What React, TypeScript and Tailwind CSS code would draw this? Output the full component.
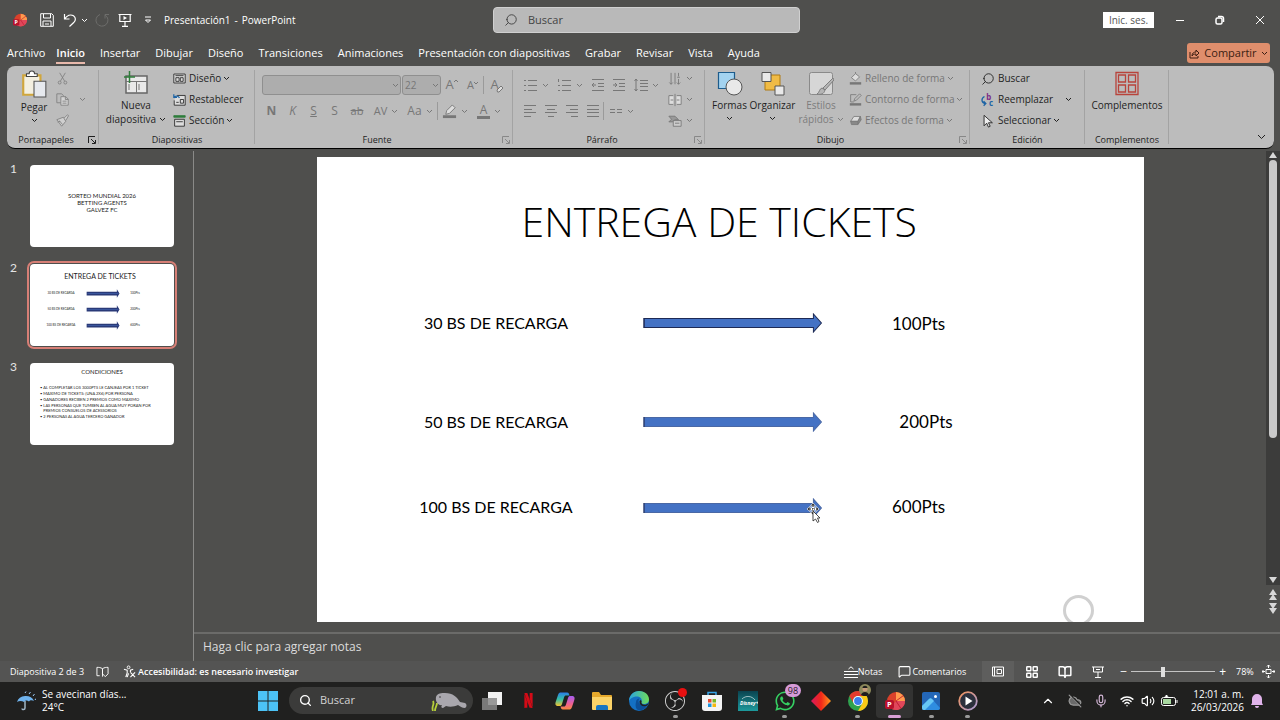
import type { ReactNode } from "react";
import { FaWhatsapp } from "react-icons/fa";
import { SiNetflix, SiObsstudio } from "react-icons/si";
import {
  BookOpen,
  ChevronUp,
  CloudOff,
  LayoutGrid,
  MessageSquare,
  Mic,
  Search,
  Volume2,
  Wifi,
} from "lucide-react";

interface IconProps {
  box?: string;
  className?: string;
  children: ReactNode;
}

function Icon({ box = "0 0 16 16", className = "h-4 w-4", children }: IconProps) {
  return (
    <svg
      viewBox={box}
      className={`shrink-0 ${className}`}
      fill="none"
      stroke="currentColor"
      aria-hidden="true"
    >
      {children}
    </svg>
  );
}

function Chevron({ className = "" }: { className?: string }) {
  return (
    <Icon box="0 0 7 5" className={`h-[5px] w-[7px] ${className}`}>
      <path d="M1 1l2.500 2.500L6 1" />
    </Icon>
  );
}

/* ---------- Title bar ---------- */

function PowerPointLogo({ className }: { className: string }) {
  return (
    <Icon box="0 0 20 20" className={className}>
      <g stroke="none">
        <circle cx="11" cy="10" r="9" fill="#d9412b" />
        <path d="M11 1a9 9 0 0 1 9 9h-9z" fill="#ff9a4d" />
        <path d="M20 10a9 9 0 0 1-15 6.700L11 10z" fill="#e0475a" />
        <path d="M11 10l7.500-5.500M11 10l5 7.500" stroke="#b9112b" strokeWidth=".8" />
        <rect x="0" y="9" width="9" height="9" rx="2" fill="#b9112b" />
        <text x="2" y="16.200" fontSize="7.500" fontWeight="700" fill="#fff" fontFamily="Open Sans">
          P
        </text>
      </g>
    </Icon>
  );
}

function TitleBar() {
  return (
    <header className="flex h-10 items-center pl-[13px]">
      <div className="flex flex-1 items-center">
        <PowerPointLogo className="h-[14px] w-[14px]" />
        <button aria-label="Guardar" className="ml-[13px]">
          <Icon box="0 0 14 14" className="h-[14px] w-[14px]">
            <path d="M.7.7h11l1.600 1.600v11H.7zM3.500 1v4h7V1M3 13V8h8v5M5 11h4" />
          </Icon>
        </button>
        <button aria-label="Deshacer" className="ml-[9px] flex items-center gap-1">
          <Icon box="0 0 14 14" className="h-[14px] w-[14px]">
            <path d="M1.500 1v5h5M1.800 5.800C4 2.500 7.500 1 10.500 2.800c2.500 1.800 2.300 4.600.5 6.400L6.500 13.500" strokeWidth="1.200" />
          </Icon>
          <Chevron />
        </button>
        <button aria-label="Rehacer" className="ml-[7px] text-[#6d6d6b]">
          <Icon box="0 0 14 14" className="h-[14px] w-[14px]">
            <path d="M5 1.500a6 6 0 1 0 5 .5M10 5.500V1.500h4" />
          </Icon>
        </button>
        <button aria-label="Presentar" className="ml-[9px]">
          <Icon box="0 0 14 14" className="h-[14px] w-[14px]">
            <path d="M.5 1.500h13M1.800 1.500v7h10.400v-7M7 8.500V13M4 13.300h6" strokeWidth="1.200" />
            <path d="M5.500 3v4L9 5z" fill="currentColor" stroke="none" />
          </Icon>
        </button>
        <button aria-label="Personalizar" className="ml-3">
          <Icon box="0 0 8 8" className="h-2 w-2">
            <path d="M1 1h6M1.500 4L4 6.500 6.500 4z" />
          </Icon>
        </button>
        <h1 className="ml-3 flex gap-1 text-[10px]">
          <span>Presentación1</span>
          <span>-</span>
          <span>PowerPoint</span>
        </h1>
      </div>
      <div className="flex h-[26px] w-[307px] items-center gap-[10px] rounded-sm border border-[#d0d0d0] bg-[#b9b9b9] px-[10px] text-[#3c3c3c]">
        <Search className="h-[14px] w-[14px] -scale-x-100" strokeWidth={1.500} />
        <input
          aria-label="Buscar"
          placeholder="Buscar"
          className="min-w-0 flex-1 text-[11px] outline-none placeholder:text-[#444]"
        />
      </div>
      <div className="flex flex-1 items-center justify-end">
        <button className="h-4 w-[51px] bg-white text-[10px] leading-4 text-[#555]">Inic. ses.</button>
        <button aria-label="Minimizar" className="ml-[21px]">
          <Icon box="0 0 10 10" className="h-[10px] w-[10px]"><path d="M1 5.500h8" /></Icon>
        </button>
        <button aria-label="Restaurar" className="ml-[30px]">
          <Icon box="0 0 10 10" className="h-[10px] w-[10px]">
            <rect x="1" y="3" width="6" height="6" rx="1.500" strokeWidth="1.500" />
            <path d="M3 1.500h3.500a2 2 0 0 1 2 2V7" strokeWidth="1.500" />
          </Icon>
        </button>
        <button aria-label="Cerrar" className="mr-[15px] ml-[30px]">
          <Icon box="0 0 10 10" className="h-[10px] w-[10px]"><path d="M1 1l8 8M9 1L1 9" /></Icon>
        </button>
      </div>
    </header>
  );
}

const tabs = [
  "Archivo",
  "Inicio",
  "Insertar",
  "Dibujar",
  "Diseño",
  "Transiciones",
  "Animaciones",
  "Presentación con diapositivas",
  "Grabar",
  "Revisar",
  "Vista",
  "Ayuda",
];

function TabBar() {
  return (
    <nav className="flex h-[26px] items-center justify-between pr-[10px] pl-[7px]">
      <div className="flex gap-[15px]">
        {tabs.map((tab) => (
          <button
            key={tab}
            className={`h-[22px] border-b-2 pt-[3px] text-[11px] whitespace-nowrap first:-mr-1 ${
              tab === "Inicio" ? "border-[#e8b9ac] font-semibold" : "border-transparent"
            }`}
          >
            {tab}
          </button>
        ))}
      </div>
      <button className="flex h-5 w-[83px] items-center justify-center gap-1 rounded-[3px] bg-[#df8e6c] text-[11px] text-[#3b1d12]">
        <Icon box="0 0 11 11" className="h-[11px] w-[11px]">
          <path d="M1 4v6h8V8M3 8c0-3 2-4 4-4V2l3 3-3 3V6C5 6 4 6.500 3 8z" />
        </Icon>
        Compartir
        <Chevron />
      </button>
    </nav>
  );
}

/* ---------- Ribbon ---------- */

interface GroupProps {
  title: string;
  width: string;
  launcher?: "on" | "off";
  children: ReactNode;
}

function Group({ title, width, launcher, children }: GroupProps) {
  return (
    <section className={`relative shrink-0 pt-[2px] ${width}`}>
      <div className="flex h-16">{children}</div>
      <h2 className={`h-4 text-center text-[9px] leading-4 ${launcher ? "pr-[14px]" : ""}`}>{title}</h2>
      {launcher && (
        <button
          aria-label={`Opciones de ${title}`}
          className={`absolute right-[3px] bottom-1 ${launcher === "off" ? "text-[#888]" : ""}`}
        >
          <Icon box="0 0 8 8" className="h-2 w-2">
            <path d="M.5 7V.5H7M3 3l4 4M7.500 4v3.500H4" />
          </Icon>
        </button>
      )}
      <span className="absolute top-1 right-0 bottom-1 w-px bg-[#a3a3a3]" />
    </section>
  );
}

interface BigButtonProps {
  icon: ReactNode;
  width: string;
  disabled?: boolean;
  children: ReactNode;
}

function BigButton({ icon, width, disabled, children }: BigButtonProps) {
  return (
    <button
      disabled={disabled}
      className={`flex flex-col items-center gap-[2px] pt-[2px] text-[10px] leading-[14px] whitespace-nowrap ${width} ${
        disabled ? "text-[#7d7d7d]" : ""
      }`}
    >
      {icon}
      <span className="flex flex-col items-center">{children}</span>
    </button>
  );
}

interface RowProps {
  icon: ReactNode;
  label: string;
  chevron?: boolean;
  disabled?: boolean;
  gap?: string;
}

function Row({ icon, label, chevron, disabled, gap = "ml-[2px]" }: RowProps) {
  return (
    <button
      disabled={disabled}
      className={`flex h-[21px] items-center text-[10px] whitespace-nowrap ${disabled ? "text-[#777]" : ""}`}
    >
      {icon}
      <span className="ml-[3px]">{label}</span>
      {chevron && <Chevron className={gap} />}
    </button>
  );
}

const small = "h-[13px] w-[13px]";

function Clipboard() {
  return (
    <Group title="Portapapeles" width="w-[92px]" launcher="on">
      <BigButton
        width="ml-[7px] w-10"
        icon={
          <Icon box="0 0 24 26" className="h-7 w-[26px]">
            <path d="M2 5h16v18H2z" fill="#f3efe0" stroke="#d0a63c" strokeWidth="2" />
            <path d="M5 6V3.500h2.500a2.500 2.500 0 0 1 5 0H15V6z" fill="#fff" stroke="#444" />
            <path d="M12 10.500h11V25H12z" fill="#e6e9ee" stroke="#555" />
          </Icon>
        }
      >
        <span>Pegar</span>
        <Chevron className="mt-1" />
      </BigButton>
      <div className="ml-[2px] flex flex-col text-[#7d7d7d]">
        <button aria-label="Cortar" className="flex h-[21px] items-center">
          <Icon className={small}>
            <path d="M4.500 1l6 10M11.500 1l-6 10" />
            <circle cx="4.500" cy="13" r="1.800" />
            <circle cx="11.500" cy="13" r="1.800" />
          </Icon>
        </button>
        <button aria-label="Copiar" className="flex h-[21px] items-center">
          <Icon className={small}>
            <path d="M6 12H1V1h6l2 2v1" />
            <path d="M6 4.500h6l3 3V15H6zM11.500 4.500V8H15M8 10h5M8 12.500h5" fill="#d5d5d5" />
          </Icon>
          <Chevron className="ml-[10px]" />
        </button>
        <button aria-label="Copiar formato" className="flex h-[21px] items-center">
          <Icon className={small}>
            <path d="M1 7l8-3 3 5-5 6zM10 5l4-4 1.500 1L12 8M4 8l4 5M2 10l3-1" fill="#cfcfcf" />
          </Icon>
        </button>
      </div>
    </Group>
  );
}

function Slides() {
  return (
    <Group title="Diapositivas" width="w-[156px]">
      <BigButton
        width="ml-1 w-[66px]"
        icon={
          <Icon box="0 0 26 26" className="h-[26px] w-[26px]">
            <path d="M3 6h21v17H3z" fill="#e9e9e9" stroke="#666" strokeWidth="1.500" />
            <path d="M3 11.500h21M13.500 11.500V23M6 14v6M16 14v6" stroke="#777" />
            <path d="M6.500 1v12M1 7h11" stroke="#2f7d3b" strokeWidth="1.500" />
          </Icon>
        }
      >
        <span>Nueva</span>
        <span className="flex items-center gap-[3px]">
          diapositiva <Chevron />
        </span>
      </BigButton>
      <div className="ml-1 flex flex-col">
        <Row
          label="Diseño"
          chevron
          icon={
            <Icon className={small}>
              <path d="M1 2.500h14v11H1z" fill="#ddd" />
              <path d="M3 4.500h10M3.500 7h4v4.500h-4zM9 7h3.500v4.500H9z" />
            </Icon>
          }
        />
        <Row
          label="Restablecer"
          icon={
            <Icon className={small}>
              <path d="M5 3h10v12H1.500V9" fill="#ddd" />
              <path d="M4 11.500h3M9 8h4v4.500H9z" />
              <path d="M1 5.500C3 3 6 3 8 6M1 1.500v4h4" stroke="#1d64a5" strokeWidth="1.500" />
            </Icon>
          }
        />
        <Row
          label="Sección"
          chevron
          icon={
            <Icon className={small}>
              <path d="M1 2h14v2H1z" fill="#2f7d3b" stroke="#2f7d3b" />
              <path d="M2 6.500h12V15H2z" fill="#ddd" />
              <path d="M4 9.500h8" />
            </Icon>
          }
        />
      </div>
    </Group>
  );
}

interface ToolProps {
  label: string;
  chevron?: boolean;
  width?: string;
  children: ReactNode;
}

function Tool({ label, chevron, width = "w-[21px]", children }: ToolProps) {
  return (
    <button
      disabled
      aria-label={label}
      className={`flex h-[26px] shrink-0 items-center justify-center gap-1 text-[12px] text-[#777] ${width}`}
    >
      {children}
      {chevron && <Chevron />}
    </button>
  );
}

function Divider() {
  return <span className="h-[18px] w-px shrink-0 self-center bg-[#9a9a9a]" />;
}

function Combo({ label, value, width }: { label: string; value: string; width: string }) {
  return (
    <div className={`relative flex items-center text-[#777] ${width}`}>
      <select
        disabled
        aria-label={label}
        className="h-5 w-full appearance-none rounded-[3px] border border-[#8f8f8f] bg-[#adadad] px-[2px] text-[10px] opacity-100"
      >
        <option>{value}</option>
      </select>
      <Chevron className="pointer-events-none absolute right-[2px]" />
    </div>
  );
}

function FontGroup() {
  return (
    <Group title="Fuente" width="w-[258px]" launcher="off">
      <div className="flex flex-col pt-1 pl-[7px]">
        <div className="flex h-[26px] items-center">
          <Combo label="Fuente" value="" width="w-[139px]" />
          <Combo label="Tamaño" value="22" width="ml-px w-[39px]" />
          <Tool label="Aumentar">
            <span className="flex text-[13px]">
              A
              <Icon box="0 0 4 4" className="mt-1 h-1 w-1"><path d="M0 3l2-2 2 2" /></Icon>
            </span>
          </Tool>
          <Tool label="Reducir">
            <span className="flex text-[11px]">
              A
              <Icon box="0 0 4 4" className="mt-1 h-1 w-1"><path d="M0 1l2 2 2-2" /></Icon>
            </span>
          </Tool>
          <Divider />
          <Tool label="Borrar formato" width="w-[26px]">
            <span className="text-[13px]">A</span>
            <Icon box="0 0 8 8" className="mt-2 -ml-[7px] h-2 w-2">
              <path d="M1 5l4-4 2 2-4 4H1.500z" fill="#ddd" />
            </Icon>
          </Tool>
        </div>
        <div className="-ml-px flex h-[26px] items-center">
          <Tool label="Negrita"><b>N</b></Tool>
          <Tool label="Cursiva"><i>K</i></Tool>
          <Tool label="Subrayado"><span className="underline">S</span></Tool>
          <Tool label="Sombra">S</Tool>
          <Tool label="Tachado" width="w-6"><span className="text-[11px] line-through">ab</span></Tool>
          <Tool label="Espaciado" chevron width="w-[34px]"><span className="text-[11px]">AV</span></Tool>
          <Tool label="Mayúsculas" chevron width="w-[34px]">Aa</Tool>
          <Divider />
          <Tool label="Resaltado" chevron width="w-[34px]">
            <Icon className="h-[15px] w-[15px]">
              <path d="M4 11l1-4 6-6 3 3-6 6z" fill="#ddd" />
              <path d="M1 13.500h14" strokeWidth="3" />
            </Icon>
          </Tool>
          <Tool label="Color" chevron width="w-[34px]">
            <span className="border-b-[3px] border-[#777] px-[3px] leading-[13px]">A</span>
          </Tool>
        </div>
      </div>
    </Group>
  );
}

function Lines({ d }: { d: string }) {
  return (
    <Icon box="0 0 14 14" className="h-[14px] w-[14px]">
      <path d={d} />
    </Icon>
  );
}

function Paragraph() {
  return (
    <Group title="Párrafo" width="w-[192px]" launcher="off">
      <div className="flex w-[144px] flex-col pt-1 pl-[6px]">
        <div className="flex">
          <Tool label="Viñetas" chevron width="w-[34px]">
            <Lines d="M0 2.500h2M0 7.500h2M0 12.500h2M4 2.500h9M4 7.500h9M4 12.500h9" />
          </Tool>
          <Tool label="Numeración" chevron width="w-[34px]">
            <Lines d="M.5 1v3M0 7.500h2M0 12.500h2M4 2.500h9M4 7.500h9M4 12.500h9" />
          </Tool>
          <Tool label="Reducir sangría">
            <Lines d="M1 1.500h12M7 5.500h6M7 8.500h6M1 12.500h12M5 7H1M3 5L1 7l2 2" />
          </Tool>
          <Tool label="Aumentar sangría">
            <Lines d="M1 1.500h12M7 5.500h6M7 8.500h6M1 12.500h12M1 7h4M3 5l2 2-2 2" />
          </Tool>
          <Tool label="Interlineado" chevron width="w-[34px]">
            <Lines d="M2 1v12M.5 3L2 1l1.500 2M.5 11L2 13l1.500-2M6 2.500h8M6 5.500h8M6 8.500h8M6 12.500h8" />
          </Tool>
        </div>
        <div className="flex">
          <Tool label="Izquierda"><Lines d="M1 1.500h12M1 5.500h8M1 8.500h12M1 12.500h7" /></Tool>
          <Tool label="Centrar"><Lines d="M1 1.500h12M3 5.500h8M1 8.500h12M4 12.500h6" /></Tool>
          <Tool label="Derecha"><Lines d="M1 1.500h12M5 5.500h8M1 8.500h12M6 12.500h7" /></Tool>
          <Tool label="Justificar"><Lines d="M1 1.500h12M1 5.500h12M1 8.500h12M1 12.500h12" /></Tool>
          <Divider />
          <Tool label="Columnas" chevron width="w-[34px]">
            <Lines d="M1 5.500h5M8 5.500h5M1 8.500h5M8 8.500h5" />
          </Tool>
        </div>
      </div>
      <div className="ml-[11px] flex flex-col text-[#777]">
        <button disabled aria-label="Dirección" className="flex h-[21px] items-center gap-1">
          <Icon className="h-[14px] w-[14px]">
            <path d="M3.500 1v13M1.500 12l2 2 2-2M8 1v13M12 1v4M10.500 6h3M12 8v6M10 12l2 2 2-2" />
          </Icon>
          <Chevron />
        </button>
        <button disabled aria-label="Alinear" className="flex h-[21px] items-center gap-1">
          <Icon className="h-[14px] w-[14px]">
            <path d="M6 3H1v10h5M10 3h5v10h-5" fill="#ddd" />
            <path d="M8 1v14M3 8h3M10 8h3" />
          </Icon>
          <Chevron />
        </button>
        <button disabled aria-label="SmartArt" className="flex h-[21px] items-center gap-1">
          <Icon className="h-[14px] w-[14px]">
            <path d="M1 2.500h7l4 4H8L5 9H1l3-3z" fill="#999" />
            <path d="M6 7.500h9V14H6z" fill="#ccc" />
            <path d="M8 10.500h5" />
          </Icon>
          <Chevron />
        </button>
      </div>
    </Group>
  );
}

function Drawing() {
  return (
    <Group title="Dibujo" width="w-[265px]" launcher="off">
      <BigButton
        width="ml-1 w-[41px]"
        icon={
          <Icon box="0 0 26 26" className="h-[26px] w-[26px]">
            <path d="M1.500 2.500h16v16h-16z" fill="#a3d3f0" stroke="#1d5c8c" strokeWidth="1.200" />
            <circle cx="17" cy="17" r="8" fill="#e9e9e9" stroke="#555" />
          </Icon>
        }
      >
        <span>Formas</span>
        <Chevron className="mt-1" />
      </BigButton>
      <BigButton
        width="w-[45px]"
        icon={
          <Icon box="0 0 26 26" className="h-[26px] w-[26px]">
            <path d="M5 5h15v15H5z" fill="#f0bb45" stroke="#b07a12" />
            <path d="M2 2.500h9v9H2zM15 16h9v9h-9z" fill="#e9e9e9" stroke="#555" />
          </Icon>
        }
      >
        <span>Organizar</span>
        <Chevron className="mt-1" />
      </BigButton>
      <BigButton
        disabled
        width="w-[52px]"
        icon={
          <Icon box="0 0 26 26" className="h-[26px] w-[26px]">
            <rect x="1.500" y="2.500" width="23" height="22" rx="2" fill="#d6d6d6" stroke="#8a8a8a" />
            <path d="M25 8L15 18l2 2 9-10zM14 18c-3 1-2 4-5 6 4 1 7 0 8-4z" fill="#b5b5b5" />
          </Icon>
        }
      >
        <span>Estilos</span>
        <span className="flex items-center gap-[3px]">
          rápidos <Chevron />
        </span>
      </BigButton>
      <div className="ml-[2px] flex flex-col">
        <Row
          disabled
          chevron
          label="Relleno de forma"
          icon={
            <Icon className={small}>
              <path d="M3 7l5-5 5 4-5 5zM8 2V0" fill="#ddd" />
              <path d="M1 14h14" strokeWidth="3" />
            </Icon>
          }
        />
        <Row
          disabled
          chevron
          label="Contorno de forma"
          icon={
            <Icon className={small}>
              <path d="M9 2H2v9h4M6 10l1-3 6-6 2 2-6 6z" />
              <path d="M1 14h14" strokeWidth="3" />
            </Icon>
          }
        />
        <Row
          disabled
          chevron
          label="Efectos de forma"
          icon={
            <Icon className={small}>
              <path d="M2 9l4-6h8l-3 6z" fill="#ddd" />
              <path d="M2 9h9v4H3zM11 9l3-6 1 4-4 6" fill="#888" />
            </Icon>
          }
        />
      </div>
    </Group>
  );
}

function Editing() {
  return (
    <Group title="Edición" width="w-[115px]">
      <div className="ml-[11px] flex flex-col">
        <Row label="Buscar" icon={<Search className="h-[14px] w-[14px] -scale-x-100" strokeWidth={1.500} />} />
        <Row
          label="Reemplazar"
          chevron
          gap="ml-3"
          icon={
            <Icon className="h-[14px] w-[14px]">
              <path d="M4 4C0 6 0 11 5 12M3 9.500L5.500 12 3 14.500" stroke="#1d64a5" strokeWidth="1.500" />
              <text x="6" y="8" fontSize="9" fill="#7a2a85" stroke="none" fontWeight="700">b</text>
              <text x="9" y="15" fontSize="9" fill="#1d64a5" stroke="none" fontWeight="700">c</text>
            </Icon>
          }
        />
        <Row
          label="Seleccionar"
          chevron
          icon={
            <Icon className="h-[14px] w-[14px]">
              <path d="M3.500 1.500v12l3-3 2 4.500 2-1-2-4H13z" fill="#eee" />
            </Icon>
          }
        />
      </div>
    </Group>
  );
}

function AddIns() {
  return (
    <Group title="Complementos" width="w-[84px]">
      <BigButton
        width="w-full"
        icon={
          <Icon box="0 0 26 26" className="h-[26px] w-[26px]">
            <g stroke="#b8433b" strokeWidth="1.300">
              <path d="M2 2.500h22v22H2z" />
              <path d="M4.500 5h7v7h-7zM14.500 5h7v7h-7zM4.500 15h7v7h-7zM14.500 15h7v7h-7z" />
            </g>
          </Icon>
        }
      >
        <span>Complementos</span>
      </BigButton>
    </Group>
  );
}

function Ribbon() {
  return (
    <div className="mr-[6px] ml-[7px] flex h-[83px] rounded-lg border-b border-black bg-[#bcbcbc] text-[#1f1f1f]">
      <Clipboard />
      <Slides />
      <FontGroup />
      <Paragraph />
      <Drawing />
      <Editing />
      <AddIns />
      <button aria-label="Contraer cinta" className="mr-2 mb-2 ml-auto self-end">
        <Icon box="0 0 9 6" className="h-[6px] w-[9px]"><path d="M1 1l3.500 3.500L8 1" /></Icon>
      </button>
    </div>
  );
}

/* ---------- Slides ---------- */

const arrowShape = "M1 5.500h169V1l8 9-8 9v-4.500H1z";

const rewards = [
  {
    label: "30 BS DE RECARGA",
    points: "100Pts",
    labelAt: "top-[35.6%] left-[21.7%]",
    arrowAt: "top-[35.7%] left-[39.5%]",
    pointsAt: "top-[36%] left-[72.8%]",
    outline: "#1d2a55",
  },
  {
    label: "50 BS DE RECARGA",
    points: "200Pts",
    labelAt: "top-[57%] left-[21.7%]",
    arrowAt: "top-[57%] left-[39.5%]",
    pointsAt: "top-[57%] left-[73.7%]",
    outline: "#4a68a5",
  },
  {
    label: "100 BS DE RECARGA",
    points: "600Pts",
    labelAt: "top-[75.3%] left-[21.7%]",
    arrowAt: "top-[75.4%] left-[39.5%]",
    pointsAt: "top-[75.3%] left-[72.8%]",
    outline: "#4a68a5",
  },
];

function Slide() {
  return (
    <article className="relative mx-auto aspect-[827/465] w-full max-w-[827px] overflow-hidden bg-white font-[Lato,sans-serif] text-black">
      <h2 className="absolute top-[14%] left-[48.7%] -translate-x-1/2 -translate-y-1/2 font-['Open_Sans',sans-serif] text-[41px] font-light whitespace-nowrap">
        ENTREGA DE TICKETS
      </h2>
      {rewards.map((item) => (
        <div key={item.label} className="whitespace-nowrap">
          <p className={`absolute -translate-x-1/2 -translate-y-1/2 text-[16px] ${item.labelAt}`}>{item.label}</p>
          <svg viewBox="0 0 179 20" className={`absolute w-[21.7%] -translate-y-1/2 ${item.arrowAt}`}>
            <path d={arrowShape} fill="#4472c4" stroke={item.outline} />
            <path d="M1 5v10" stroke="#1d2a55" />
          </svg>
          <p className={`absolute -translate-x-1/2 -translate-y-1/2 text-[17px] ${item.pointsAt}`}>{item.points}</p>
        </div>
      ))}
      <span className="absolute -bottom-1 left-[90.3%] h-[31px] w-[31px] rounded-full border-[3px] border-[#d0d0d0]" />
      <svg viewBox="0 0 16 20" className="absolute top-[74.4%] left-[59.2%] h-5 w-4">
        <path d="M7 0l2.500 3h-5zM7 12l2.500-3h-5zM1 6l3-2.500v5zM13 6l-3-2.500v5z" fill="#111" stroke="#fff" strokeWidth=".7" />
        <path d="M4 6h6M7 3v6" stroke="#fff" strokeWidth="2.500" />
        <path d="M4 6h6M7 3v6" stroke="#111" strokeDasharray="1 1" />
        <path d="M7 8v10l2.500-2 2 3.500 1.500-1-1.500-3.500H14z" fill="#fff" stroke="#222" strokeWidth=".8" />
      </svg>
    </article>
  );
}

const conditions = [
  "AL COMPLETAR LOS 3000PTS LE CANJEAS POR 1 TICKET",
  "MAXIMO DE TICKETS: (UNA 2X6) POR PERSONA",
  "GANADORES RECIBEN 2 PREMIOS COMO MAXIMO",
  "LAS PERSONAS QUE TUMBEN AL AGUA MUY PORAN POR PREMIOS CONSUELOS DE ACESSORIOS",
  "2 PERSONAS AL AGUA TERCERO GANADOR",
];

function Thumb({ number, active, children }: { number: number; active?: boolean; children: ReactNode }) {
  return (
    <li className="flex gap-3">
      <span className="w-2 shrink-0 text-[12px] leading-2 text-[#e4e4e4]">{number}</span>
      <button
        className={`h-[82px] min-w-0 flex-1 overflow-hidden rounded-[4px] bg-white text-[#222] ${
          active ? "outline-[2px] outline-offset-[1px] outline-[#d77f76]" : ""
        }`}
      >
        {children}
      </button>
    </li>
  );
}

function ThumbnailPane() {
  return (
    <aside className="w-[194px] shrink-0 border-r border-[#8a8a88] pt-[14px] pr-[19px] pl-[10px]">
      <ol className="flex flex-col gap-[17px] font-[Lato,sans-serif]">
        <Thumb number={1}>
          <span className="block pb-2 text-[6px] leading-[7px]">
            SORTEO MUNDIAL 2026
            <br />
            BETTING AGENTS
            <br />
            GALVEZ FC
          </span>
        </Thumb>
        <Thumb number={2} active>
          <span className="block h-full pt-[7px]">
            <span className="block pr-1 text-[7px] leading-[10px]">ENTREGA DE TICKETS</span>
            <span className="mt-2 flex flex-col gap-2 text-[3px] leading-2">
              {rewards.map((item) => (
                <span key={item.label} className="flex items-center">
                  <span className="w-[57px] pl-[5px]">{item.label}</span>
                  <svg viewBox="0 0 179 20" className="w-8 overflow-visible" preserveAspectRatio="none" height="5">
                    <path d={arrowShape} fill="#3f5fa8" stroke="#2a3a78" strokeWidth="6" />
                  </svg>
                  <span className="w-8">{item.points}</span>
                </span>
              ))}
            </span>
          </span>
        </Thumb>
        <Thumb number={3}>
          <span className="block h-full pt-1">
            <span className="block text-[6px] leading-[10px]">CONDICIONES</span>
            <span className="mt-2 block pr-3 pl-[10px] text-left text-[4px]">
              {conditions.map((text) => (
                <span key={text} className="mb-px flex gap-px leading-[5px]">
                  <span>•</span>
                  <span>{text}</span>
                </span>
              ))}
            </span>
          </span>
        </Thumb>
      </ol>
    </aside>
  );
}

function ScrollBar() {
  return (
    <div className="flex w-[14px] shrink-0 flex-col items-center text-[#d8d8d8]">
      <div className="flex w-full flex-1 flex-col items-center gap-[2px] bg-[#3c3c3b] pt-px pb-[2px]">
        <Icon box="0 0 8 6" className="h-[6px] w-2"><path d="M0 6h8L4 0z" fill="currentColor" stroke="none" /></Icon>
        <span className="h-[278px] w-2 rounded-full bg-[#c9c9c9]" />
        <Icon box="0 0 8 6" className="mt-auto h-[6px] w-2"><path d="M0 0h8L4 6z" fill="currentColor" stroke="none" /></Icon>
      </div>
      <button aria-label="Diapositiva anterior" className="pt-1">
        <Icon box="0 0 8 11" className="h-[11px] w-2"><path d="M0 6h8L4 0zM0 11h8L4 5z" fill="currentColor" stroke="none" /></Icon>
      </button>
      <button aria-label="Diapositiva siguiente" className="pt-[3px] pb-[18px]">
        <Icon box="0 0 8 11" className="h-[11px] w-2"><path d="M0 0h8L4 6zM0 5h8l-4 6z" fill="currentColor" stroke="none" /></Icon>
      </button>
    </div>
  );
}

/* ---------- Status bar and taskbar ---------- */

function StatusBar() {
  return (
    <footer className="flex h-[21px] items-center bg-[#545453] pr-[5px] pl-[10px] text-[9px] whitespace-nowrap">
      <span className="w-[86px]">Diapositiva 2 de 3</span>
      <button aria-label="Ortografía" className="mr-[14px]">
        <Icon box="0 0 14 12" className="h-3 w-[13px]">
          <path d="M7 2.500C5 1 3 1 1 1v9h3M7 2.500C9 1 11 1 13 1v7l-3 3-3-3zM7 2.500V11" />
        </Icon>
      </button>
      <button className="flex items-center gap-[2px] font-semibold">
        <Icon box="0 0 14 14" className="h-[13px] w-[13px]">
          <circle cx="6" cy="2.500" r="1.500" />
          <path d="M1 4.500l3.500 1v3L3 13M11 4.500L8 5.500v2M6 9l-1.500 4M8 8l5 5M13 8l-5 5" strokeWidth="1.200" />
        </Icon>
        Accesibilidad: es necesario investigar
      </button>
      <div className="ml-auto flex items-center">
        <button className="flex items-center">
          <Icon box="0 0 14 12" className="h-3 w-[14px]"><path d="M0 5.500h14M0 8.500h14M0 11.500h14M4.500 3L7 .8 9.500 3" /></Icon>
          Notas
        </button>
        <button className="ml-4 flex items-center gap-px">
          <MessageSquare className="h-[13px] w-[13px]" strokeWidth={2} />
          Comentarios
        </button>
        <button aria-label="Normal" className="ml-4 flex h-[21px] w-8 items-center justify-center bg-[#5e5e5d]">
          <Icon box="0 0 12 10" className="h-[11px] w-3"><path d="M.5.5h11v9H.5zM2.500.500v9M5 3h4.500v4H5z" /></Icon>
        </button>
        <button aria-label="Clasificador" className="flex w-9 justify-center">
          <LayoutGrid className="h-[14px] w-[14px]" strokeWidth={2.500} />
        </button>
        <button aria-label="Lectura" className="flex w-[30px] justify-center">
          <BookOpen className="h-[14px] w-[14px]" strokeWidth={2.500} />
        </button>
        <button aria-label="Presentación" className="flex w-9 justify-center">
          <Icon box="0 0 12 12" className="h-3 w-3"><path d="M0 1h12M1.500 1v5h9V1M6 6v5M3 11.500h6M4 3.500h4" /></Icon>
        </button>
        <button aria-label="Alejar" className="ml-1 text-[12px]">−</button>
        <input
          type="range"
          aria-label="Zoom"
          min={10}
          max={190}
          defaultValue={78}
          className="mx-1 h-[10px] w-[84px] appearance-none bg-[linear-gradient(#c4c4c4,#c4c4c4)] bg-[length:100%_1px] bg-center bg-no-repeat [&::-webkit-slider-thumb]:h-[10px] [&::-webkit-slider-thumb]:w-1 [&::-webkit-slider-thumb]:appearance-none [&::-webkit-slider-thumb]:bg-[#dedede]"
        />
        <button aria-label="Acercar" className="text-[12px]">+</button>
        <span className="ml-[10px] w-[26px]">78%</span>
        <button aria-label="Ajustar">
          <Icon box="0 0 13 13" className="h-[13px] w-[13px]">
            <path d="M4 4.500h5v4H4zM6.500 0v3M6.500 10v3M0 6.500h3M10 6.500h3M5 1.500L6.500 0 8 1.500M5 11.500L6.500 13 8 11.500M1.500 5L0 6.500 1.500 8M11.500 5L13 6.500 11.500 8" />
          </Icon>
        </button>
      </div>
    </footer>
  );
}

function AppSlot({ label, mark, active, children }: { label: string; mark?: boolean; active?: boolean; children: ReactNode }) {
  return (
    <button
      aria-label={label}
      className={`relative flex h-[34px] items-center justify-center rounded ${active ? "bg-[#333332]" : ""}`}
    >
      {children}
      {mark && (
        <span
          className={`absolute bottom-0 h-[3px] rounded-full ${active ? "w-[13px] bg-[#d9a0d6]" : "w-[5px] bg-[#9a9a9a]"}`}
        />
      )}
    </button>
  );
}

function Apps() {
  return (
    <div className="grid w-[512px] grid-cols-14">
      <AppSlot label="Vista de tareas">
        <Icon box="0 0 22 20" className="h-5 w-[22px]">
          <path d="M7 1h14v13H7z" fill="#f2f2f2" stroke="none" />
          <path d="M1 7h15v12H1z" fill="#8a8a8a" fillOpacity=".85" stroke="none" />
        </Icon>
      </AppSlot>
      <AppSlot label="Netflix"><SiNetflix className="h-[15px] w-[15px] text-[#d40b17]" /></AppSlot>
      <AppSlot label="Copilot">
        <Icon box="0 0 20 20" className="h-5 w-5">
          <defs>
            <linearGradient id="copA" x1="0" y1="0" x2="0" y2="1">
              <stop stopColor="#2b7de9" />
              <stop offset=".5" stopColor="#35bfa6" />
              <stop offset="1" stopColor="#f3c230" />
            </linearGradient>
            <linearGradient id="copB" x1="0" y1="0" x2="0" y2="1">
              <stop stopColor="#a55cf0" />
              <stop offset=".6" stopColor="#f0608f" />
              <stop offset="1" stopColor="#f78a3c" />
            </linearGradient>
          </defs>
          <path d="M6 1.500h6c2 0 2 1.500 2.500 3H11c-1 0-1.500.5-2 2l-2 6.500c-.5 1.500-1 2-2.500 2H3C0 15 0 12.500 1 10l2-6c.7-2 1.500-2.500 3-2.500z" fill="url(#copA)" stroke="none" />
          <path d="M14 18.500H8c-2 0-2-1.500-2.500-3H9c1 0 1.500-.5 2-2L13 7c.5-1.500 1-2 2.500-2H17c3 0 3 2.500 2 5l-2 6c-.7 2-1.500 2.500-3 2.500z" fill="url(#copB)" stroke="none" />
        </Icon>
      </AppSlot>
      <AppSlot label="Explorador">
        <Icon box="0 0 22 20" className="h-5 w-[22px]">
          <g stroke="none">
            <path d="M1 2a1 1 0 0 1 1-1h6l2 3h10a1 1 0 0 1 1 1v13H1z" fill="#e6a92c" />
            <path d="M1 6h20v12a1 1 0 0 1-1 1H2a1 1 0 0 1-1-1z" fill="#fbd368" />
            <path d="M5 19v-3a2 2 0 0 1 2-2h8a2 2 0 0 1 2 2v3z" fill="#1976c2" />
          </g>
        </Icon>
      </AppSlot>
      <AppSlot label="Edge">
        <Icon box="0 0 20 20" className="h-5 w-5">
          <defs>
            <linearGradient id="edge" x1="0" y1="0" x2="1" y2="0">
              <stop stopColor="#2aa3e0" />
              <stop offset="1" stopColor="#6edc5a" />
            </linearGradient>
          </defs>
          <g stroke="none">
            <circle cx="10" cy="10" r="10" fill="#1470c4" />
            <path d="M0 10C0 4 5 0 10 0c6 0 10 4 10 8.500 0 3-2.500 4.500-5 4.500-2 0-3-1-2.500-2C14 7 10 5 6.500 5.500 3 6 1 8 0 10z" fill="url(#edge)" />
            <path d="M7 11c0-2 1.500-3.500 3.500-3.500C8 10 10 16 18.500 14 16 19 11 20 9 19c-2-1-3-4-2-8z" fill="#0c4f98" />
            <path d="M12.500 11C12 12 13 13.500 15.500 13.800c1.500 0 3-.6 4-1.800l-1 2.500c-4 2-8 0-8-3.500 0-1 .5-1.500 1-2 1 .5 1.300 1 1 2z" fill="#20201f" />
          </g>
        </Icon>
      </AppSlot>
      <AppSlot label="OBS" mark>
        <SiObsstudio className="h-5 w-5 text-[#d6d6d6]" />
        <span className="absolute top-1 right-[6px] h-[9px] w-[9px] rounded-full bg-[#e81010]" />
      </AppSlot>
      <AppSlot label="Tienda">
        <Icon box="0 0 20 20" className="h-5 w-5">
          <path d="M6 5V1.500h8V5" stroke="#36a3e8" strokeWidth="1.500" />
          <g stroke="none">
            <path d="M0 4h20v13a3 3 0 0 1-3 3H3a3 3 0 0 1-3-3z" fill="#f4f4f4" />
            <path d="M6 8h3.500v3.500H6z" fill="#e8492e" />
            <path d="M10.500 8H14v3.500h-3.500z" fill="#76b82a" />
            <path d="M6 12.500h3.500V16H6z" fill="#1e95e0" />
            <path d="M10.500 12.500H14V16h-3.500z" fill="#f6b80e" />
          </g>
        </Icon>
      </AppSlot>
      <AppSlot label="Disney+">
        <Icon box="0 0 20 20" className="h-5 w-5">
          <defs>
            <linearGradient id="disney" x1="0" y1="0" x2="0" y2="1">
              <stop stopColor="#0a4350" />
              <stop offset="1" stopColor="#1d9a9c" />
            </linearGradient>
          </defs>
          <path d="M0 0h20v20H0z" fill="url(#disney)" stroke="none" />
          <path d="M4 8c4-4 10-3 13 1" stroke="#fff" strokeWidth=".6" />
          <text x="2" y="13.500" fontSize="5" fontStyle="italic" fontWeight="700" fill="#fff" stroke="none">Disney+</text>
        </Icon>
      </AppSlot>
      <AppSlot label="WhatsApp" mark>
        <FaWhatsapp className="h-[22px] w-[22px] text-[#35d062]" />
        <span className="absolute top-0 right-[2px] rounded-full bg-[#d69ad8] px-[3px] text-[9px] leading-[13px] text-[#2b1a2b]">98</span>
      </AppSlot>
      <AppSlot label="AnyDesk">
        <Icon box="0 0 20 20" className="h-5 w-5">
          <defs>
            <linearGradient id="rhomb" x1="0" y1="0" x2="1" y2="0">
              <stop stopColor="#d81b60" />
              <stop offset=".5" stopColor="#f02618" />
              <stop offset="1" stopColor="#ff9a1f" />
            </linearGradient>
          </defs>
          <path d="M10 0l10 10-10 10L0 10z" fill="url(#rhomb)" stroke="none" />
        </Icon>
      </AppSlot>
      <AppSlot label="Chrome" mark>
        <Icon box="0 0 20 20" className="h-5 w-5">
          <g stroke="none">
            <circle cx="10" cy="10" r="10" fill="#2fa24f" />
            <path d="M1.340 5A10 10 0 0 1 18.660 5H10a5 5 0 0 0-4.330 7.500z" fill="#e33b2e" />
            <path d="M18.660 5A10 10 0 0 1 10 20l4.330-7.500A5 5 0 0 0 10 5z" fill="#fbc917" />
            <circle cx="10" cy="10" r="5" fill="#fff" />
            <circle cx="10" cy="10" r="3.900" fill="#3b7ded" />
          </g>
        </Icon>
        <Icon box="0 0 12 12" className="absolute top-0 right-[5px] h-3 w-3">
          <g stroke="none">
            <circle cx="6" cy="6" r="6" fill="#8d8a5c" />
            <circle cx="6" cy="5" r="2.500" fill="#c79b7b" />
            <path d="M3.500 4c0-3 5-3 5 0zM2 11c1-4 7-4 8 0-2 1.500-6 1.500-8 0z" fill="#1d1d1d" />
          </g>
        </Icon>
      </AppSlot>
      <AppSlot label="PowerPoint" mark active><PowerPointLogo className="h-5 w-5" /></AppSlot>
      <AppSlot label="Fotos" mark>
        <Icon box="0 0 18 18" className="h-[18px] w-[18px]">
          <g stroke="none">
            <rect width="18" height="18" rx="2" fill="#2467b8" />
            <path d="M0 14l7-7c1-1 2-1 3 0l8 9a2 2 0 0 1-2 2H2a2 2 0 0 1-2-2z" fill="#2f8de0" />
            <path d="M0 14l7-7c1-1 2-1 3 0l2 2-9 9H2a2 2 0 0 1-2-2z" fill="#67c7f5" />
            <circle cx="13.500" cy="4.500" r="1.500" fill="#fff" />
          </g>
        </Icon>
      </AppSlot>
      <AppSlot label="Reproductor" mark>
        <Icon box="0 0 20 20" className="h-5 w-5">
          <defs>
            <linearGradient id="media" x1="0" y1="0" x2="1" y2="1">
              <stop stopColor="#f2935b" />
              <stop offset="1" stopColor="#a79bd8" />
            </linearGradient>
          </defs>
          <circle cx="10" cy="10" r="8.800" fill="#2b2f3c" stroke="url(#media)" strokeWidth="1.800" />
          <path d="M7.500 5.500v9l7-4.500z" fill="#fff" stroke="none" />
        </Icon>
      </AppSlot>
    </div>
  );
}

function Taskbar() {
  return (
    <div className="flex h-[38px] items-center bg-[#20201f] pr-[17px] pb-px pl-4">
      <button className="flex w-[242px] items-center gap-[6px] text-left text-[10px] leading-[13px]">
        <Icon box="0 0 20 20" className="h-5 w-5">
          <path d="M1 11a9 8 0 0 1 17-1c-2-1-4-1-5 .5-2-1.500-4-1-5 .5-2-1.500-5-1.500-7 0z" fill="#6fb3ee" stroke="none" />
          <path d="M9 10v7c0 2-3 2-3 .5" stroke="#9fb6c8" strokeWidth="1.500" />
          <path d="M9 2l1-1.500M13 3l1.500-2M17 5l1.500-2M19 9l1-1.500" stroke="#9ccbf5" />
        </Icon>
        <span>
          Se avecinan días...
          <br />
          24°C
        </span>
      </button>
      <button aria-label="Inicio" className="mr-[11px]">
        <Icon box="0 0 20 20" className="h-5 w-5">
          <path d="M0 0h9.500v9.500H0zM10.500 0H20v9.500h-9.500zM0 10.500h9.500V20H0zM10.500 10.500H20V20h-9.500z" fill="#4cc2f5" stroke="none" />
        </Icon>
      </button>
      <div className="mr-px flex h-[27px] w-[184px] items-center gap-2 rounded-full bg-[#3b3b3a] pr-[6px] pl-[10px]">
        <Search className="h-[13px] w-[13px] shrink-0" strokeWidth={2.500} />
        <input
          aria-label="Buscar en Windows"
          placeholder="Buscar"
          className="min-w-0 flex-1 text-[11px] outline-none placeholder:text-[#d2d2d2]"
        />
        <Icon box="0 0 36 20" className="h-5 w-9">
          <path d="M2 20c-2-5 2-6 0-10M4 20c0-4 2-5 2-8" stroke="#b6cf3a" strokeWidth="1.800" />
          <path d="M5 6c1-4 6-4 9-4 8 0 12 4 15 9l5 1c2 1 2 4 0 5-3 0-5-2-7-3-4 2-9 2-12 1l-3 2c-2 0-2-2-1-3-3 1-7-3-6-8z" fill="#a9a7ad" stroke="none" />
          <circle cx="9" cy="6" r=".8" fill="#333" stroke="none" />
        </Icon>
      </div>
      <Apps />
      <div className="ml-auto flex items-center">
        <ChevronUp className="h-[14px] w-[14px]" />
        <CloudOff className="ml-[13px] h-[14px] w-[14px] fill-[#6a6a6a] text-[#9a9a9a]" />
        <Mic className="ml-3 h-[14px] w-[14px] text-[#d5b8d8]" />
        <Wifi className="ml-3 h-[14px] w-[14px]" strokeWidth={2.500} />
        <Volume2 className="ml-[7px] h-[14px] w-[14px]" />
        <Icon box="0 0 17 12" className="ml-[6px] h-3 w-[17px]">
          <rect x=".5" y="2.500" width="14" height="8" rx="2" />
          <path d="M2 4h8v5H2z" fill="#a8d8a0" stroke="none" />
          <path d="M16 5v3M5.500 0v3M3.500 2.500L5.500 0l2 2.500" />
        </Icon>
        <div className="ml-3 flex w-[54px] flex-col items-end text-[10px] leading-[13px] whitespace-nowrap">
          <span>12:01 a. m.</span>
          <span>26/03/2026</span>
        </div>
        <Icon box="0 0 12 14" className="ml-[7px] h-[14px] w-3">
          <path d="M6 0a5 5 0 0 1 5 5v4l1 2H0l1-2V5a5 5 0 0 1 5-5zM4 12h4a2 2 0 0 1-4 0z" fill="#e0b3ea" stroke="none" />
        </Icon>
      </div>
    </div>
  );
}

export default function App() {
  return (
    <div className="flex min-h-screen flex-col bg-[#4f4f4d] font-['Open_Sans',sans-serif] text-white">
      <TitleBar />
      <TabBar />
      <Ribbon />
      <main className="flex flex-1 pt-[2px]">
        <ThumbnailPane />
        <div className="flex min-w-0 flex-1 flex-col">
          <div className="flex flex-1">
            <div className="min-w-0 flex-1 pt-[6px]">
              <Slide />
            </div>
            <ScrollBar />
          </div>
          <div className="h-[29px] border-t-2 border-[#6b6b69] px-[9px] text-[12px] leading-[26px] text-[#dcdcdc]">
            Haga clic para agregar notas
          </div>
        </div>
      </main>
      <StatusBar />
      <Taskbar />
    </div>
  );
}
